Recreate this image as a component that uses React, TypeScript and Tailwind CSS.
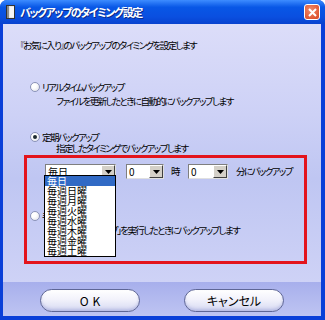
import React from "react";

const font = "font-['Noto_Sans_CJK_JP','Noto_Sans',sans-serif] [font-feature-settings:'palt']";

const Radio = ({ checked }: { checked?: boolean }) => (
  <span className="w-[10px] h-[10px] rounded-full border border-[#8b93b8] bg-[radial-gradient(circle_at_35%_35%,#ffffff_30%,#dcdce6_100%)] flex items-center justify-center shrink-0">
    {checked && <span className="w-[4px] h-[4px] rounded-full bg-[#1d2a30]" />}
  </span>
);

const Select = ({ value, width }: { value: string; width: string }) => (
  <div className={`${width} h-[15px] bg-white border border-[#7f7f7f] border-r-[#e0e0e0] border-b-[#e0e0e0] flex items-center`}>
    <span className="flex-1 pl-[2px] text-[10px] leading-[13px] [letter-spacing:0px] text-black">{value}</span>
    <span className="w-[14px] h-[13px] bg-[#d4d0c8] border border-white border-r-[#404040] border-b-[#404040] flex items-center justify-center">
      <svg width="7" height="4" viewBox="0 0 7 4">
        <path d="M0 0h7L3.5 4z" fill="#000" />
      </svg>
    </span>
  </div>
);

const PillButton = ({ label, spaced }: { label: string; spaced?: boolean }) => (
  <button
    className={`w-[100px] h-[23px] rounded-full border border-[#5e6696] bg-[linear-gradient(#ffffff,#f2f2fb_45%,#d6d9f2)] shadow-[inset_0_-2px_3px_rgba(120,130,200,0.35)] text-[12px] text-black flex items-center justify-center ${
      spaced ? "[letter-spacing:4px] pl-[4px]" : "[letter-spacing:0px]"
    }`}
  >
    {label}
  </button>
);

const options = ["毎日", "毎週日曜", "毎週月曜", "毎週火曜", "毎週水曜", "毎週木曜", "毎週金曜", "毎週土曜"];

export default function App() {
  return (
    <div className={`${font} w-[325px] h-[320px] bg-[#0a3fd8] rounded-t-[7px] flex flex-col overflow-hidden`}>
      {/* title bar */}
      <div className="h-[24px] bg-[linear-gradient(#3d8cff,#0857e6_30%,#0a4fe0_70%,#0842cf)] flex items-center pl-[6px] pr-[5px]">
        <svg width="9" height="14" viewBox="0 0 9 14" className="mr-[5px]">
          <rect x="0.5" y="0.5" width="8" height="13" fill="#e8e8e8" stroke="#333" />
          <rect x="1" y="1" width="2" height="12" fill="#8a8a8a" />
          <rect x="4" y="2" width="4" height="10" fill="#f6f6f6" />
        </svg>
        <span className="text-white text-[11px] font-bold [letter-spacing:-1.5px] [text-shadow:1px_1px_0_#0a2a8a] flex-1">バックアップのタイミング設定</span>
        <span className="w-[16px] h-[16px] rounded-[3px] border border-white bg-[radial-gradient(circle_at_40%_35%,#f08a6a,#d9451e)] flex items-center justify-center">
          <svg width="9" height="9" viewBox="0 0 9 9">
            <path d="M1 1l7 7M8 1l-7 7" stroke="#fff" strokeWidth="2" />
          </svg>
        </span>
      </div>

      {/* body */}
      <div className="ml-[3px] mr-[4px] mb-[4px] flex-1 flex flex-col text-black">
        <div className="h-[258px] bg-[linear-gradient(#dcddf9,#cdd1f6_35%,#bfc6f2_60%,#ced2f6)] flex flex-col text-[9.5px] [letter-spacing:-1.6px] whitespace-nowrap">
          <div className="mt-[14px] pl-[17px] h-[14px] leading-[14px]">『お気に入り』のバックアップのタイミングを設定します</div>

          <div className="mt-[28px] pl-[27px] h-[14px] flex items-center gap-[2px]">
            <Radio />
            <span className="leading-[14px]">リアルタイムバックアップ</span>
          </div>
          <div className="pl-[53px] h-[14px] leading-[14px]">ファイルを更新したときに自動的にバックアップします</div>

          <div className="mt-[23px] pl-[27px] h-[12px] flex items-center gap-[2px]">
            <Radio checked />
            <span className="leading-[12px]">定期バックアップ</span>
          </div>
          <div className="pl-[53px] h-[10px] leading-[10px]">指定したタイミングでバックアップします</div>

          <div className="relative mt-[2px] ml-[21px] w-[283px] h-[109px] border-[3px] border-[#e3141c] flex flex-col">
            <div className="mt-[6px] pl-[18px] h-[15px] flex items-center">
              <Select value="毎日" width="w-[71px]" />
              <div className="ml-[10px]">
                <Select value="0" width="w-[38px]" />
              </div>
              <span className="ml-[7px] w-[17px]">時</span>
              <Select value="0" width="w-[40px]" />
              <span className="ml-[8px]">分にバックアップ</span>
            </div>

            <div className="mt-[30px] pl-[3px] h-[14px] flex items-center gap-[2px]">
              <Radio />
              <span className="leading-[14px]">手動バックアップ</span>
            </div>
            <div className="pl-[26px] h-[14px] leading-[14px]">「今すぐバックアップ」を実行したときにバックアップします</div>

            <ul className="absolute left-[17px] top-[17px] w-[72px] bg-white border border-black text-[10px] leading-[10px] [letter-spacing:0px]">
              {options.map((o, i) => (
                <li key={o} className={`h-[10px] pl-[2px] ${i === 0 ? "bg-[#316ac5] text-white" : "text-black"}`}>
                  {o}
                </li>
              ))}
            </ul>
          </div>
        </div>

        {/* button band */}
        <div className="flex-1 bg-[linear-gradient(#a7afec,#b3baef_50%,#bec4f2)] flex items-start pt-[7px] pl-[37px] gap-[44px]">
          <PillButton label="OK" spaced />
          <PillButton label="キャンセル" />
        </div>
      </div>
    </div>
  );
}
